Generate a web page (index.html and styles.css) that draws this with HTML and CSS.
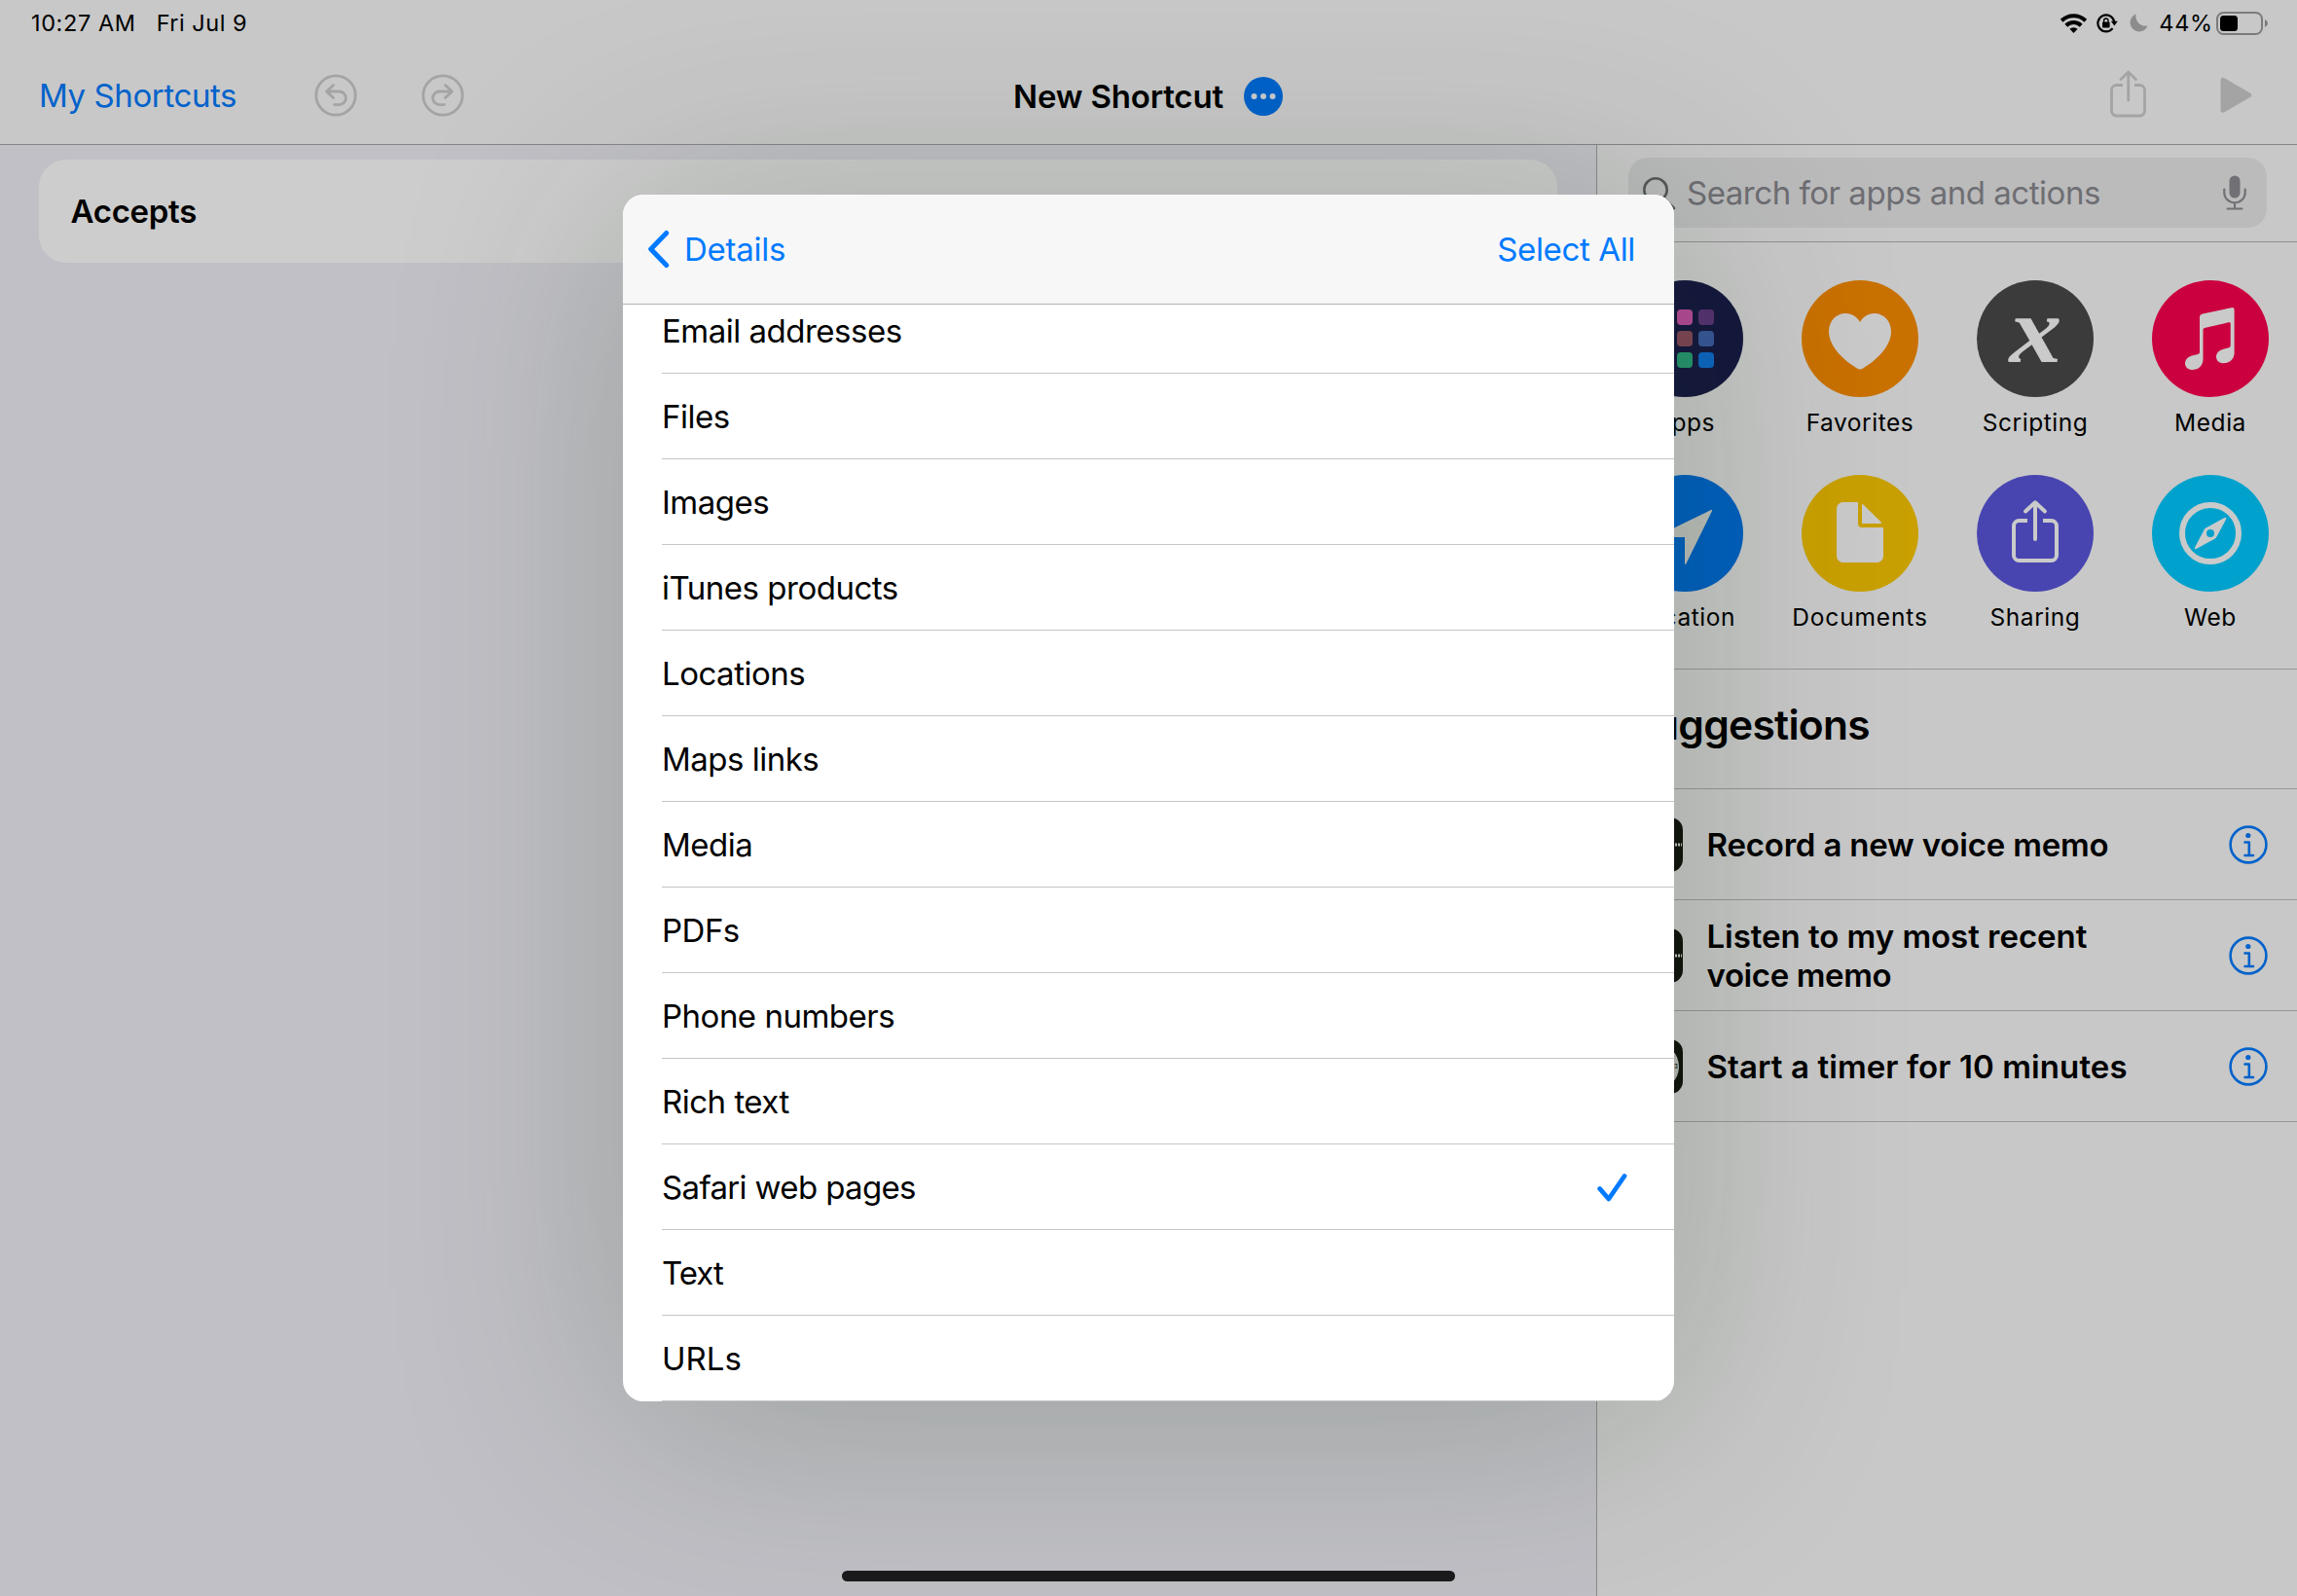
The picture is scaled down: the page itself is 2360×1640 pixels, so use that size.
FILE: index.html
```html
<!DOCTYPE html>
<html lang="en">
<head>
<meta charset="utf-8">
<title>New Shortcut</title>
<link rel="stylesheet" href="styles.css">
</head>
<body>
<div class="app">
  <header class="topbar">
    <div class="status">
      <span class="status-time">10:27 AM</span>
      <span class="status-date">Fri Jul 9</span>
      <div class="status-right">
        <svg class="ic-wifi" width="29" height="22" viewBox="0 0 29 22" fill="none" stroke="#000" stroke-width="4">
          <path d="M2.2 8.2a17.6 17.6 0 0 1 24.6 0"/>
          <path d="M6.8 13.2a11 11 0 0 1 15.4 0"/>
          <path d="M14.5 21l-4.1-4.2a5.9 5.9 0 0 1 8.200 0z" fill="#000" stroke="none"/>
        </svg>
        <svg class="ic-lock" width="22" height="20" viewBox="0 0 22 20">
          <path d="M18.200 8a8.500 8.500 0 1 0-1.600 7.100" fill="none" stroke="#000" stroke-width="2.200"/>
          <path d="M14.800 7.800h7l-3.400 4.600z"/>
          <rect x="6" y="8.600" width="7.600" height="5.800" rx="1"/>
          <path d="M7.600 9V7.200a2.200 2.200 0 0 1 4.400 0V9" fill="none" stroke="#000" stroke-width="1.300"/>
        </svg>
        <svg class="ic-moon" width="19" height="19" viewBox="0 0 19 19">
          <path d="M6.500.4C5.300 6.800 10.600 13.900 18.600 12.600 17 16.400 13.600 18.500 10 18.500 4.800 18.500.6 14.300.6 9.300.6 5.300 3 1.800 6.500.4z" fill="#8c8c8c"/>
        </svg>
        <span class="status-pct">44%</span>
        <svg class="ic-batt" width="53" height="24" viewBox="0 0 53 24">
          <rect x="1" y="1" width="46" height="22" rx="6.500" fill="none" stroke="#7b7b7b" stroke-width="2"/>
          <rect x="4" y="4" width="18" height="16" rx="3.500"/>
          <path d="M50 8q3 1.300 3 4t-3 4z" fill="#7b7b7b"/>
        </svg>
      </div>
    </div>
    <nav class="nav">
      <div class="nav-left">
        <a class="nav-link">My Shortcuts</a>
        <svg class="ic-undo" width="44" height="44" viewBox="0 0 44 44" fill="none" stroke="#a4a4a4" stroke-width="2.800" stroke-linecap="round" stroke-linejoin="round">
          <circle cx="22" cy="22" r="20.200"/>
          <path d="M19.500 11.500l-7 6.500 7 6.500M13 18h12.500a6.800 6.800 0 0 1 0 13.600H20.500"/>
        </svg>
        <svg class="ic-redo" width="44" height="44" viewBox="0 0 44 44" fill="none" stroke="#a4a4a4" stroke-width="2.800" stroke-linecap="round" stroke-linejoin="round">
          <circle cx="22" cy="22" r="20.200"/>
          <path d="M24.500 11.500l7 6.500-7 6.500M31 18H18.500a6.800 6.800 0 0 0 0 13.600H23.500"/>
        </svg>
      </div>
      <div class="nav-title">
        <h1>New Shortcut</h1>
        <svg width="40" height="40" viewBox="0 0 40 40"><circle cx="20" cy="20" r="20" fill="#0062cb"/><g fill="#c8ccd0"><circle cx="10.500" cy="20" r="3"/><circle cx="20" cy="20" r="3"/><circle cx="29.500" cy="20" r="3"/></g></svg>
      </div>
      <div class="nav-right">
        <svg class="ic-share" width="38" height="49" viewBox="0 0 38 49" fill="none" stroke="#a4a4a4" stroke-width="2.800" stroke-linecap="round" stroke-linejoin="round">
          <path d="M13 15.500H6.500a5 5 0 0 0-5 5V42a5 5 0 0 0 5 5h24a5 5 0 0 0 5-5V20.500a5 5 0 0 0-5-5H25" stroke-linecap="butt"/>
          <path d="M18.700 31V2M11 9.600L18.700 2l7.700 7.600"/>
        </svg>
        <svg class="ic-play" width="33" height="38" viewBox="0 0 33 38"><path d="M.5 3.500C.5 1 2.500.3 4.500 1.300L31 16.800c1.800 1 1.800 3 0 4L4.500 36.300c-2 1-4 .3-4-2.200z" fill="#a4a4a4"/></svg>
      </div>
    </nav>
  </header>

  <div class="body">
    <main class="editor">
      <section class="card">Accepts</section>
    </main>

    <aside class="library">
      <div class="search-wrap">
        <div class="search">
          <svg class="ic-search" width="36" height="36" viewBox="0 0 36 36" fill="none" stroke="#55585a" stroke-width="2.600" stroke-linecap="round"><circle cx="14" cy="14" r="11.700"/><path d="M22.500 22.500L33 33"/></svg>
          <span class="search-text">Search for apps and actions</span>
          <svg class="ic-mic" width="24" height="36" viewBox="0 0 24 36" fill="none" stroke="#707075" stroke-width="2.200" stroke-linecap="round"><rect x="6.500" y="0.500" width="11" height="23" rx="5.500" fill="#707075" stroke="none"/><path d="M1.300 14.500V18a10.700 10.300 0 0 0 21.400 0v-3.500M12 28.500V34M4.500 34.500h15"/></svg>
        </div>
      </div>

      <div class="categories">
        <div class="cat">
          <svg viewBox="0 0 120 120"><circle cx="60" cy="60" r="60" fill="#15183f"/><rect x="30" y="30" width="16" height="16" rx="4" fill="#b5473f"/><rect x="52" y="30" width="16" height="16" rx="4" fill="#b54a98"/><rect x="74" y="30" width="16" height="16" rx="4" fill="#573371"/><rect x="30" y="52" width="16" height="16" rx="4" fill="#b57b30"/><rect x="52" y="52" width="16" height="16" rx="4" fill="#7f4655"/><rect x="74" y="52" width="16" height="16" rx="4" fill="#385798"/><rect x="30" y="74" width="16" height="16" rx="4" fill="#6ba040"/><rect x="52" y="74" width="16" height="16" rx="4" fill="#269570"/><rect x="74" y="74" width="16" height="16" rx="4" fill="#0c66c4"/></svg>
          <span>Apps</span>
        </div>
        <div class="cat">
          <svg viewBox="0 0 120 120"><circle cx="60" cy="60" r="60" fill="#c97100"/><path d="M60 43C57 37.500 51.500 34 45.500 34 35.500 34 28 42 28 52.500 28 68 43 82 57 90.500 59 91.700 61 91.700 63 90.500 77 82 92 68 92 52.500 92 42 84.500 34 74.500 34 68.500 34 63 37.500 60 43z" fill="#cacaca"/></svg>
          <span>Favorites</span>
        </div>
        <div class="cat">
          <div class="disc-x"><i>x</i></div>
          <span>Scripting</span>
        </div>
        <div class="cat">
          <svg viewBox="0 0 120 120"><circle cx="60" cy="60" r="60" fill="#cb003e"/><path d="M52 34.500Q49 35.300 49 38V74Q49 75.700 47 76.100L42 77.300C37 78.500 34 81.500 34 85.500 34 89.300 37.300 92 41.500 92 48 92 52.500 87.500 52.500 81V51Q52.500 49.300 54 48.900L79 43.200Q80.700 42.900 80.700 44.500V67.300Q80.700 68.900 79 69.300L74.500 70.400C69 71.700 66 74.500 66 78.800 66 82.600 69.200 85.300 73.500 85.300 80 85.300 84.600 80.800 84.600 74.500V30.500Q84.600 27.600 81.500 28.200z" fill="#cacaca"/></svg>
          <span>Media</span>
        </div>
        <div class="cat">
          <svg viewBox="0 0 120 120"><circle cx="60" cy="60" r="60" fill="#0060c0"/><path d="M87 36Q88.700 35.300 88 37L61.500 91Q60.300 93 60 91V64H33Q30.500 63.700 32.500 62.500z" fill="#bcbfbb"/></svg>
          <span>Location</span>
        </div>
        <div class="cat cat-wide">
          <svg viewBox="0 0 120 120"><circle cx="60" cy="60" r="60" fill="#c9a000"/><g fill="#cacaca"><path d="M58 28H42.500A6.500 6.500 0 0 0 36 34.500V83.500A6.500 6.500 0 0 0 42.500 90H77.500A6.500 6.500 0 0 0 84 83.500V54H62A4 4 0 0 1 58 50z"/><path d="M62 31Q62 29.300 63.300 30.500L81.500 48.300Q82.700 50 81 50H62z"/></g></svg>
          <span>Documents</span>
        </div>
        <div class="cat">
          <svg viewBox="0 0 120 120"><circle cx="60" cy="60" r="60" fill="#4845b1"/><g fill="none" stroke="#cacaca" stroke-width="4"><path d="M52 47H43.500A5.500 5.500 0 0 0 38 52.500V82.500A5.500 5.500 0 0 0 43.500 88H76.500A5.500 5.500 0 0 0 82 82.500V52.500A5.500 5.500 0 0 0 76.500 47H68"/><path d="M60 66V28.500M50 37.500L60 28.300l10 9.200" stroke-linecap="round" stroke-linejoin="round"/></g></svg>
          <span>Sharing</span>
        </div>
        <div class="cat">
          <svg viewBox="0 0 120 120"><circle cx="60" cy="60" r="60" fill="#00a2cd"/><circle cx="60" cy="60" r="29" fill="none" stroke="#cacaca" stroke-width="6"/><path fill-rule="evenodd" d="M74.500 44Q77.200 43 76 45.700L66.500 63.500Q66 64.700 64.800 65.400L45.500 76Q43 77 44.200 74.300L53.500 56.500Q54.200 55 55.400 54.500zM60 56a4 4 0 1 0 0 8 4 4 0 0 0 0-8z" fill="#cacaca"/></svg>
          <span>Web</span>
        </div>
      </div>

      <h2 class="sugg-title">Suggestions</h2>
      <div class="sugg">
        <div class="app-icon"><svg viewBox="0 0 56 56"><path d="M3 28h52" stroke="#c4c7c2" stroke-width="3" stroke-dasharray="2 1"/><path d="M14 18v20M20 22v12M34 20v16" stroke="#c4c7c2" stroke-width="2"/></svg></div>
        <p class="t1">Record a new voice memo</p>
        <svg class="info" viewBox="0 0 40 40"><circle cx="20" cy="20" r="18.400"/><path d="M16.500 17.500H20.800V30.500M16.500 31H25"/><circle class="dot" cx="19.800" cy="10.500" r="2.600"/></svg>
      </div>
      <div class="sugg">
        <div class="app-icon"><svg viewBox="0 0 56 56"><path d="M3 28h52" stroke="#c4c7c2" stroke-width="3" stroke-dasharray="2 1"/><path d="M14 18v20M20 22v12M34 20v16" stroke="#c4c7c2" stroke-width="2"/></svg></div>
        <p class="t2">Listen to my most recent<br><span class="t2b">voice memo</span></p>
        <svg class="info" viewBox="0 0 40 40"><circle cx="20" cy="20" r="18.400"/><path d="M16.500 17.500H20.800V30.500M16.500 31H25"/><circle class="dot" cx="19.800" cy="10.500" r="2.600"/></svg>
      </div>
      <div class="sugg">
        <div class="app-icon"><svg viewBox="0 0 56 56"><circle cx="28" cy="28" r="24" fill="#b9bbb7"/><path d="M28 28V12M28 28l9 8" stroke="#111" stroke-width="2"/><text x="47" y="30" font-size="6" font-weight="600" fill="#222">3</text></svg></div>
        <p class="t3">Start a timer for 10 minutes</p>
        <svg class="info" viewBox="0 0 40 40"><circle cx="20" cy="20" r="18.400"/><path d="M16.500 17.500H20.800V30.500M16.500 31H25"/><circle class="dot" cx="19.800" cy="10.500" r="2.600"/></svg>
      </div>
    </aside>
  </div>

  <div class="sheet-shadow"></div>
  <div class="sheet">
    <div class="sheet-head">
      <a class="back"><svg width="24" height="40" viewBox="0 0 24 40" fill="none" stroke="#007aff" stroke-width="5" stroke-linecap="round" stroke-linejoin="round"><path d="M20.700 3.500L4.700 20l16 16.500"/></svg><span>Details</span></a>
      <a class="select-all">Select All</a>
    </div>
    <ul class="list">
      <li>Email addresses</li>
      <li>Files</li>
      <li>Images</li>
      <li>iTunes products</li>
      <li>Locations</li>
      <li>Maps links</li>
      <li>Media</li>
      <li>PDFs</li>
      <li>Phone numbers</li>
      <li>Rich text</li>
      <li class="checked">Safari web pages <svg width="32" height="32" viewBox="0 0 32 32" fill="none" stroke="#007aff" stroke-width="4.800" stroke-linecap="round" stroke-linejoin="round"><path d="M3.700 17.500L12.800 28 29 4.500"/></svg></li>
      <li class="tight">Text</li>
      <li class="wide">URLs</li>
    </ul>
  </div>

  <div class="home-bar"></div>
</div>
</body>
</html>
```
FILE: styles.css
```css
* { box-sizing: border-box; margin: 0; padding: 0; }

body {
  width: 2360px;
  height: 1640px;
  overflow: hidden;
  font-family: Inter, "Liberation Sans", sans-serif;
  font-size: 33px;
  color: #000;
}

svg { display: block; flex: none; }

.app {
  position: relative;
  display: flex;
  flex-direction: column;
  width: 2360px;
  height: 1640px;
  overflow: hidden;
  background: #c8c8c8;
}

/* Status bar and navigation */
.topbar { height: 149px; border-bottom: 1px solid #858587; }

.status {
  display: flex;
  align-items: center;
  height: 47px;
  padding: 0 30px 0 32px;
  font-size: 23.5px;
  letter-spacing: 0.6px;
}
.status-date { margin-left: 21px; letter-spacing: 0.5px; }
.status-right { display: flex; align-items: center; margin-left: auto; }
.ic-lock { margin-left: 9px; }
.ic-moon { margin-left: 12px; }
.status-pct { margin-left: 11px; letter-spacing: 0.8px; }
.ic-batt { margin-left: 3px; }

.nav {
  display: grid;
  grid-template-columns: 1fr auto 1fr;
  align-items: center;
  height: 102px;
  padding: 0 46px 0 40px;
}
.nav-left { display: flex; align-items: center; }
.nav-link { width: 283px; color: #0062cb; letter-spacing: -0.4px; }
.ic-redo { margin-left: 66px; }
.nav-title { display: flex; align-items: center; gap: 21px; margin-left: 5px; padding-top: 2px; }
.nav-title h1 { font-size: 33px; font-weight: 600; letter-spacing: -0.18px; }
.nav-right { display: flex; align-items: center; justify-content: flex-end; gap: 75px; }
.ic-share { margin-top: -3px; }

/* Panes */
.body { display: flex; flex: 1; min-height: 0; }

.editor { width: 1640px; padding: 15px 40px; background: #c1c0c6; }
.card {
  height: 106px;
  padding-left: 32.5px;
  border-radius: 28px;
  background: #cdcdcd;
  font-weight: 600;
  line-height: 107px;
  letter-spacing: -0.3px;
}

.library { width: 720px; border-left: 1px solid #8a8a8c; overflow: hidden; }

.search-wrap { height: 100px; padding: 13px 31px 0 32px; border-bottom: 1px solid #8f8f91; }
.search {
  display: flex;
  align-items: center;
  height: 72px;
  padding: 0 21px 0 14px;
  border-radius: 20px;
  background: #bbbbbc;
}
.ic-search { margin-top: 1px; }
.search-text { flex: 1; margin-left: 10px; color: #6e6e73; letter-spacing: -0.47px; }

.categories {
  display: grid;
  grid-template-columns: repeat(4, 180px);
  grid-auto-rows: 200px;
  height: 439px;
  padding-top: 39px;
  border-bottom: 1px solid #979797;
}
.cat { display: flex; flex-direction: column; align-items: center; gap: 11px; font-size: 24.5px; line-height: 30px; letter-spacing: 0.55px; }
.cat-wide { letter-spacing: 0.85px; }
.cat svg, .disc-x { width: 120px; height: 120px; }
.disc-x {
  border-radius: 50%;
  background: #3b3b3b;
  color: #cacaca;
  text-align: center;
  font: bold italic 98px/103px "Liberation Serif", serif;
  letter-spacing: 0;
}
.disc-x i { display: inline-block; transform: scaleX(1.1); }

.sugg-title {
  height: 123px;
  padding-left: 31px;
  border-bottom: 1px solid #979797;
  font-size: 42.5px;
  font-weight: 600;
  line-height: 113px;
  letter-spacing: -0.7px;
}
.sugg {
  display: flex;
  align-items: center;
  height: 114px;
  padding: 0 30px 0 32px;
  border-bottom: 1px solid #979797;
  font-weight: 600;
  line-height: 40px;
}
.sugg p { flex: 1; margin-left: 24.5px; }
.t1 { letter-spacing: -0.19px; }
.t2 { letter-spacing: -0.04px; }
.t2b { letter-spacing: -0.38px; }
.t3 { letter-spacing: 0.1px; }
.app-icon { width: 56px; height: 56px; border-radius: 13px; background: #10140f; overflow: hidden; }
.info { width: 40px; height: 40px; fill: none; stroke: #0062cb; stroke-width: 2.6; stroke-linecap: round; stroke-linejoin: round; }
.info .dot { fill: #0062cb; stroke: none; }

/* Modal sheet */
.sheet, .sheet-shadow {
  position: absolute;
  left: 640px;
  top: 200px;
  width: 1080px;
  height: 1240px;
  border-radius: 21px;
}
.sheet-shadow { box-shadow: 0 20px 240px rgba(14, 42, 0, 0.22); }
.sheet { display: flex; flex-direction: column; overflow: hidden; background: #fff; }
.sheet-head {
  position: relative;
  z-index: 1;
  display: flex;
  flex: none;
  align-items: center;
  justify-content: space-between;
  height: 113px;
  padding: 0 40px 0 24px;
  border-bottom: 1px solid #b3b3b4;
  background: #f7f7f7;
  color: #007aff;
}
.back { display: flex; align-items: center; gap: 15px; letter-spacing: -0.25px; }
.select-all { letter-spacing: -0.35px; }

.list { flex: 1; min-height: 0; margin-top: -17px; padding-left: 40px; list-style: none; }
.list li {
  display: flex;
  align-items: center;
  justify-content: space-between;
  height: 88px;
  padding-right: 48.5px;
  border-bottom: 1px solid #c6c6c8;
  letter-spacing: -0.5px;
}
.list .checked { letter-spacing: -0.65px; }
.list .tight { letter-spacing: -1px; }
.list .wide { letter-spacing: 0; }

.home-bar {
  position: absolute;
  left: 865px;
  top: 1614px;
  width: 630px;
  height: 11px;
  border-radius: 5.5px;
  background: #1a1a1c;
}
```
